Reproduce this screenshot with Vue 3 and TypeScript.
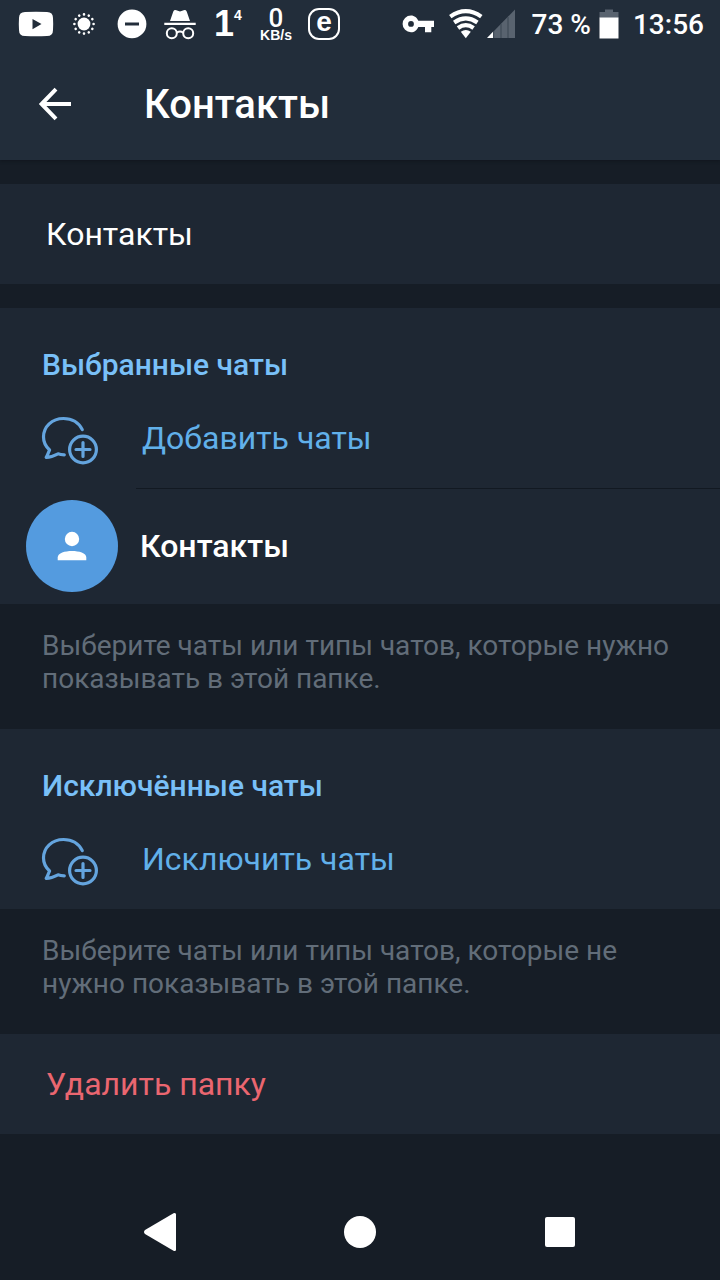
<script setup lang="ts">
import { ref } from 'vue'

interface Section {
  title: string
  action: string
  chats: string[]
  hint: string
}

const folderName = ref<string>('Контакты')

const sections: Section[] = [
  {
    title: 'Выбранные чаты',
    action: 'Добавить чаты',
    chats: ['Контакты'],
    hint: 'Выберите чаты или типы чатов, которые нужно показывать в этой папке.',
  },
  {
    title: 'Исключённые чаты',
    action: 'Исключить чаты',
    chats: [],
    hint: 'Выберите чаты или типы чатов, которые не нужно показывать в этой папке.',
  },
]
</script>

<template>
  <div class="screen">
    <header class="top">
      <div class="status">
        <div class="group">
          <svg class="cell" viewBox="0 0 48 48" aria-hidden="true">
            <path fill="#fff" fill-rule="evenodd" d="M13 12Q24 11.400 35 12Q41 12.200 41 18Q41.400 24 41 30Q41 36 35 36Q24 36.600 13 36Q7 36 7 30Q6.600 24 7 18Q7 12.200 13 12ZM20.500 19V29.300L29.500 24.100Z" />
          </svg>
          <svg class="cell" viewBox="0 0 48 48" aria-hidden="true">
            <circle cx="24" cy="24" r="6.400" fill="#fff" />
            <circle cx="24" cy="24" r="9.600" fill="none" stroke="#fff" stroke-width="2.600" stroke-linecap="round" pathLength="120" stroke-dasharray="0.01 9.990" />
          </svg>
          <svg class="cell" viewBox="0 0 48 48" aria-hidden="true">
            <path fill="#fff" fill-rule="evenodd" d="M24 9.500a14.400 14.400 0 1 0 0 28.800a14.400 14.400 0 1 0 0-28.800ZM17 22.400H31V25.600H17Z" />
          </svg>
          <svg class="cell" viewBox="0 0 48 48" aria-hidden="true">
            <path fill="#fff" d="M14 21L17.300 11.500Q18.200 9.500 20.300 10.200L24 11.400L27.700 10.200Q29.800 9.500 30.700 11.500L34 21ZM8.300 22.800H39.700V25H8.300Z" />
            <g fill="none" stroke="#fff" stroke-width="2">
              <circle cx="15.800" cy="33.300" r="5" />
              <circle cx="32.200" cy="33.300" r="5" />
              <path d="M20.800 32.600Q24 30.600 27.200 32.600" />
            </g>
          </svg>
          <span class="cell count"><b>1</b><small>4</small></span>
          <span class="cell speed"><b>0</b><small>KB/s</small></span>
          <span class="cell"><span class="badge">e</span></span>
        </div>
        <div class="group">
          <svg class="cell" viewBox="0 0 48 48" aria-hidden="true">
            <path fill="#fff" fill-rule="evenodd" d="M17 15.500C20.400 15.500 23.200 17.800 24.300 20.800H40V27H37.300V32.200H31V27H24.300C23.200 30 20.400 32.300 17 32.300A8.400 8.400 0 0 1 17 15.500ZM17 21A2.900 2.900 0 1 0 17 26.800A2.900 2.900 0 1 0 17 21Z" />
          </svg>
          <svg class="cell" viewBox="0 0 48 48" aria-hidden="true">
            <g fill="none" stroke="#fff" stroke-width="4.200">
              <path d="M8.300 16.600Q23.800 5.800 39.300 16.600" />
              <path d="M12.200 22.400Q23.800 14.400 35.400 22.400" />
              <path d="M16 28Q23.800 22.400 31.600 28" />
            </g>
            <path fill="#fff" d="M18.800 31.800Q23.800 28.400 28.800 31.800L23.800 38.200Z" />
          </svg>
          <svg class="signal" viewBox="0 0 30 30" aria-hidden="true">
            <path fill="#59636f" d="M7.500 22.500L29 0.500V29H7.500Z" />
            <path fill="#fff" d="M1 29L7.200 22.600V29Z" />
            <path stroke="#3b4652" stroke-width="1" d="M7.700 22V29M15 15V29M22 8V29" />
          </svg>
          <span class="percent">73 %</span>
          <svg class="battery" viewBox="0 0 20 30" aria-hidden="true">
            <path fill="#59636f" d="M6 0.500H14V3H19.500V9H0.500V3H6Z" />
            <path fill="#fff" d="M0.500 8.500H19.500V29.500H0.500Z" />
          </svg>
          <time class="clock">13:56</time>
        </div>
      </div>
      <div class="bar">
        <button class="back" type="button" aria-label="Назад">
          <svg viewBox="0 0 36 36" aria-hidden="true">
            <path fill="none" stroke="#fff" stroke-width="4" d="M19 3.200L4.600 18L19 32.800M4.600 18H34" />
          </svg>
        </button>
        <h1>Контакты</h1>
      </div>
    </header>

    <main>
      <div class="panel name">
        <input v-model="folderName" type="text" aria-label="Название папки" />
      </div>

      <section v-for="section in sections" :key="section.title">
        <div class="panel">
          <h2>{{ section.title }}</h2>
          <button class="action" type="button">
            <svg viewBox="0 0 60 52" aria-hidden="true">
              <g fill="none" stroke="#64a4de" stroke-width="3.200" stroke-linecap="round" stroke-linejoin="round">
                <path d="M42.300 16.600C38.700 9.500 31.500 5.500 23.500 5.500C12 5.500 3.500 13.500 3.500 24C3.500 29.200 5.700 33.500 9.600 37C8.300 39.600 7.500 42.200 6.200 44.400C10.500 44.200 14.500 42.600 18 40.800C20 41.600 22.200 41.800 24.300 41.800" />
                <circle cx="43" cy="36.500" r="13.400" />
                <path d="M43 29.500V43.500M36 36.500H50" />
              </g>
            </svg>
            <span>{{ section.action }}</span>
          </button>
          <div v-for="chat in section.chats" :key="chat" class="chat">
            <span class="avatar">
              <svg viewBox="0 0 30 30" aria-hidden="true">
                <circle cx="15" cy="8" r="7.200" fill="#fff" />
                <path fill="#fff" d="M0.700 29.300V26.500C0.700 22 8 20 15 20S29.300 22 29.300 26.500V29.300Z" />
              </svg>
            </span>
            <span>{{ chat }}</span>
          </div>
        </div>
        <p class="hint">{{ section.hint }}</p>
      </section>

      <button class="panel delete" type="button">Удалить папку</button>
    </main>

    <nav>
      <button type="button" aria-label="Назад">
        <svg viewBox="0 0 48 48" aria-hidden="true">
          <path fill="#fff" d="M37.500 5.200Q40 4.200 40 6.500V41.500Q40 43.800 37.500 42.800L9 26Q7 24 9 22Z" />
        </svg>
      </button>
      <button type="button" aria-label="Домой">
        <svg viewBox="0 0 48 48" aria-hidden="true"><circle cx="24" cy="24" r="16" fill="#fff" /></svg>
      </button>
      <button type="button" aria-label="Недавние">
        <svg viewBox="0 0 48 48" aria-hidden="true"><rect x="9" y="9" width="30" height="30" rx="2" fill="#fff" /></svg>
      </button>
    </nav>
  </div>
</template>

<style>
body {
  margin: 0;
  background: #161d26;
}
</style>

<style scoped>
.screen {
  display: flex;
  flex-direction: column;
  min-height: 100vh;
  background: #161d26;
  color: #fff;
  font-family: Roboto, "Noto Sans", sans-serif;
  font-size: 32px;
  line-height: 40px;
}

button,
input {
  box-sizing: border-box;
  margin: 0;
  padding: 0;
  border: 0;
  background: none;
  color: inherit;
  font: inherit;
  text-align: left;
}

svg {
  display: block;
  flex: none;
}

.top {
  background: #222d3a;
  box-shadow: 0 1px 3px #10161d;
}

.status {
  display: flex;
  justify-content: space-between;
  height: 48px;
  padding: 0 16px 0 12px;
}

.group {
  display: flex;
  align-items: center;
}

.cell {
  box-sizing: border-box;
  display: flex;
  align-items: center;
  justify-content: center;
  width: 48px;
  height: 48px;
}

.count,
.speed,
.badge {
  font-family: "Liberation Sans", Arial, sans-serif;
  font-weight: 700;
}

.count b {
  font-size: 36px;
}

.count small {
  align-self: flex-start;
  padding-top: 8px;
  font-size: 14px;
  line-height: 14px;
}

.speed {
  flex-direction: column;
  padding-top: 2px;
}

.speed b {
  font-family: Roboto, sans-serif;
  font-size: 26px;
  font-weight: 500;
  line-height: 20px;
}

.speed small {
  font-size: 14px;
  line-height: 14px;
}

.badge {
  box-sizing: border-box;
  width: 32px;
  height: 32px;
  border: 2px solid #fff;
  border-radius: 11px;
  font-size: 28px;
  line-height: 24px;
  text-align: center;
}

.signal {
  width: 30px;
  height: 30px;
  margin: 0 16px 0 -4px;
}

.percent,
.clock {
  padding-top: 2px;
  font-size: 28px;
  font-weight: 500;
  white-space: nowrap;
}

.battery {
  width: 20px;
  height: 30px;
  margin: 0 14px 0 8px;
}

.bar {
  display: flex;
  align-items: center;
  height: 112px;
  padding-left: 37px;
}

.back {
  width: 107px;
}

.back svg {
  width: 36px;
  height: 36px;
}

h1,
h2,
p {
  margin: 0;
}

h1 {
  padding-top: 2px;
  font-size: 40px;
  font-weight: 500;
  line-height: 48px;
}

main {
  display: flex;
  flex-direction: column;
  padding-top: 24px;
}

.panel {
  background: #1e2733;
}

.name {
  margin-bottom: 24px;
}

.name input {
  display: block;
  width: 100%;
  height: 100px;
  padding: 0 46px;
  outline: none;
}

h2 {
  padding: 37px 42px 0;
  color: #79c0f8;
  font-size: 30px;
  font-weight: 500;
}

.action {
  display: flex;
  align-items: center;
  gap: 42px;
  width: 100%;
  height: 103px;
  padding: 4px 0 0 40px;
  color: #61b0ea;
}

.action span {
  padding-bottom: 2px;
}

.action svg {
  width: 60px;
  height: 52px;
}

.chat {
  display: flex;
  align-items: center;
  gap: 22px;
  height: 116px;
  padding-left: 26px;
  background: linear-gradient(#121922, #121922) 136px 0 / 100% 1px no-repeat;
  font-weight: 500;
}

.avatar {
  display: flex;
  align-items: center;
  justify-content: center;
  width: 92px;
  height: 92px;
  border-radius: 50%;
  background: #549bdf;
}

.avatar svg {
  width: 30px;
  height: 30px;
}

.hint {
  padding: 25px 42px 34px;
  color: #626d79;
  font-size: 28px;
  line-height: 33px;
}

.delete {
  height: 100px;
  padding: 0 46px;
  color: #ea6670;
}

nav {
  display: flex;
  justify-content: center;
  gap: 152px;
  margin-top: auto;
  padding: 24px 0;
}

nav svg {
  width: 48px;
  height: 48px;
}
</style>
